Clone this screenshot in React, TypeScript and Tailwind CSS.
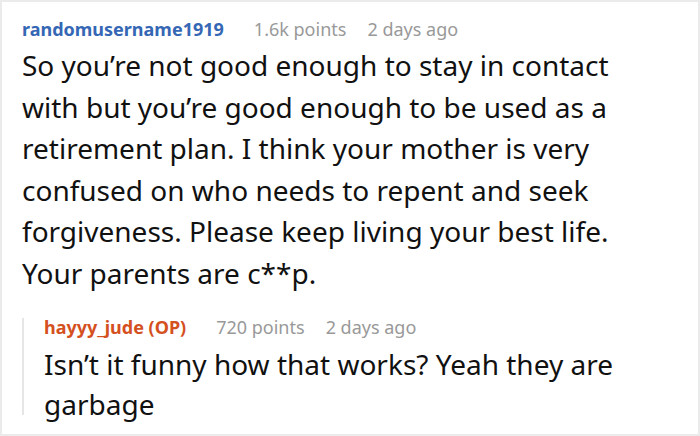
const meta = "font-normal text-[#999]";

export default function App() {
  return (
    <div
      className="h-[436px] w-[700px] border-2 border-[#ebebeb] bg-white pl-5 pr-[50px] pt-[14px] text-[#111]"
      style={{ fontFamily: '"Noto Sans", sans-serif' }}
    >
      <div className="flex items-baseline gap-[30px] text-[18px] leading-[27px]">
        <span className="font-bold text-[#3567b5]">randomusername1919</span>
        <span className="flex gap-[21px]">
          <span className={meta}>1.6k points</span>
          <span className={meta}>2 days ago</span>
        </span>
      </div>
      <p className="mt-[2px] text-[28px] leading-[41.5px]">
        So you’re not good enough to stay in contact with but you’re good enough to be used as a retirement plan. I think
        your mother is very confused on who needs to repent and seek forgiveness. Please keep living your best life. Your
        parents are c**p.
      </p>
      <div className="mt-[24px] flex">
        <div className="h-[97px] w-[2px] shrink-0 bg-[#e6e6e6]" />
        <div className="pl-5">
          <div className="flex items-baseline gap-[30px] text-[18px] leading-[18px]">
            <span className="font-bold text-[#d4501e]">hayyy_jude (OP)</span>
            <span className="flex gap-[21px]">
              <span className={meta}>720 points</span>
              <span className={meta}>2 days ago</span>
            </span>
          </div>
          <p className="mt-[8px] text-[28px] leading-[40px]">Isn’t it funny how that works? Yeah they are garbage</p>
        </div>
      </div>
    </div>
  );
}
